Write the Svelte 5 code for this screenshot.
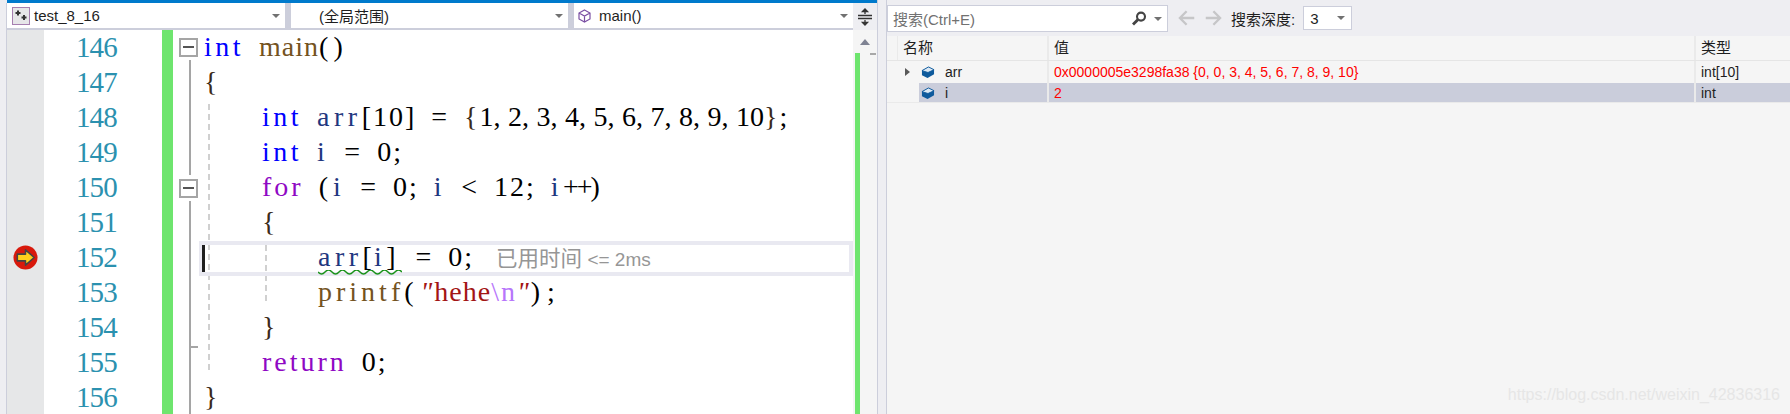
<script>
  const numbers = [146, 147, 148, 149, 150, 151, 152, 153, 154, 155, 156];
</script>

<div class="screen">
  <section class="left">
    <div class="accent"></div>
    <div class="navbar">
      <div class="combo project">
        <svg class="proj-icon" width="18" height="18" viewBox="0 0 18 18">
          <rect x="0.5" y="0.5" width="17" height="17" fill="#e6e6e8" stroke="#a67fb0" />
          <path d="M6 3.500v5M3.500 6h5M12 8v5M9.500 10.500h5" stroke="#333" stroke-width="2" />
        </svg>
        <span>test_8_16</span>
        <i class="caret"></i>
      </div>
      <div class="combo scope">
        <span>(全局范围)</span>
        <i class="caret"></i>
      </div>
      <div class="combo func">
        <svg width="13" height="14" viewBox="0 0 13 14" fill="none" stroke="#7a4fa3" stroke-width="1.2">
          <path d="M6.500 1L12 4v6l-5.500 3L1 10V4zM1 4l5.500 3L12 4M6.500 7v6" />
        </svg>
        <span>main()</span>
        <i class="caret"></i>
      </div>
      <div class="split-btn">
        <svg width="16" height="18" viewBox="0 0 16 18" fill="none" stroke="#333" stroke-width="1.3">
          <path d="M1 7.500h14M1 10.500h14M8 1v5M8 12v5" />
          <path d="M5.500 3.500L8 1l2.500 2.500zM5.500 14.500L8 17l2.500-2.500z" fill="#333" />
        </svg>
      </div>
    </div>

    <div class="editor">
      <div class="glyph-margin">
        <svg class="arrow" width="25" height="25" viewBox="0 0 26 26">
          <circle cx="13" cy="13" r="12.500" fill="#d8190c" />
          <path d="M4.500 9.500H13V5l9 8-9 8v-4.500H4.500z" fill="#ffcf1c" stroke="#444" stroke-width="1.6" stroke-linejoin="round" />
        </svg>
      </div>
      <div class="numbers">
        {#each numbers as n}
          <div>{n}</div>
        {/each}
      </div>
      <div class="changes"></div>
      <div class="code">
        <div class="outline-line one"></div>
        <div class="outline-line two"></div>
        <div class="outline-tick"></div>
        <div class="fold f1"></div>
        <div class="fold f2"></div>
        <div class="guide g1"></div>
        <div class="guide g2"></div>
        <div class="current">
          <i class="cursor"></i>
          <svg class="squiggle" width="84" height="6" viewBox="0 0 84 6">
            <path d="M0 2q3.500 4 7 0t7 0 7 0 7 0 7 0 7 0 7 0 7 0 7 0 7 0 7 0 7 0" fill="none" stroke="#1c931c" stroke-width="1.4" />
          </svg>
        </div>

        <div class="line"><b class="kw">int</b> <b class="fn narrow">main</b><span class="wide">()</span></div>
        <div class="line"><b class="br">&#123;</b></div>
        <div class="line in1"><b class="kw">int</b> <b class="var">arr</b>[10] = <b class="br">&#123;</b><span class="list">1, 2, 3, 4, 5, 6, 7, 8, 9, 10</span><b class="br">&#125;</b>;</div>
        <div class="line in1"><b class="kw">int</b> <b class="var">i</b> = 0;</div>
        <div class="line in1"><b class="ctl">for</b> <span class="wide">(</span><b class="var">i</b> = 0; <b class="var">i</b> &lt; 12; <b class="var">i</b><span class="tight">++</span>)</div>
        <div class="line in1"><b class="br">&#123;</b></div>
        <div class="line in2"><b class="var">arr</b>[<b class="var">i</b><span class="wide">]</span> = 0;<span class="hint"><span class="hint-cjk">已用时间</span> &lt;= 2ms</span></div>
        <div class="line in2"><b class="fn">printf</b><span class="wider">(</span><b class="str"><em>"</em><span class="snug">hehe</span><b class="esc">\n</b><em>"</em></b><span class="wider">)</span>;</div>
        <div class="line in1"><b class="br">&#125;</b></div>
        <div class="line in1"><b class="ctl">return</b> 0;</div>
        <div class="line"><b class="br">&#125;</b></div>
      </div>
      <div class="scrollbar">
        <i class="up"></i>
        <i class="thumb"></i>
        <i class="green"></i>
      </div>
    </div>
  </section>

  <section class="right">
    <div class="toolbar">
      <div class="search">
        <span>搜索(Ctrl+E)</span>
        <svg width="16" height="16" viewBox="0 0 20 20" fill="none" stroke="#444">
          <circle cx="12.500" cy="7" r="5" stroke-width="2.6" />
          <path d="M8.500 11l-6 6" stroke-width="3.6" />
        </svg>
        <i class="caret"></i>
      </div>
      <svg class="nav" width="44" height="18" viewBox="0 0 46 18" fill="none" stroke="#c6c6c8" stroke-width="2.4">
        <path d="M17 9H2M9 2L2 9l7 7M29 9h15M37 2l7 7-7 7" />
      </svg>
      <span class="depth-label">搜索深度:</span>
      <div class="depth">
        <span>3</span>
        <i class="caret"></i>
      </div>
    </div>

    <div class="table">
      <div class="row head">
        <div class="c-name"><span class="stub"></span>名称</div>
        <div class="c-value">值</div>
        <div class="c-type">类型</div>
      </div>
      <div class="row">
        <div class="c-name">
          <i class="expander"></i>
          <svg class="cube" width="14" height="13" viewBox="0 0 15 14"><path d="M1 5l7-4 6 3v5l-7 4-6-3z" fill="#0e5a9c" /><path d="M1 5l7-4 6 3-6.500 3z" fill="#dbe8f4" stroke="#0e5a9c" /></svg>
          <span>arr</span>
        </div>
        <div class="c-value red">0x0000005e3298fa38 &#123;0, 0, 3, 4, 5, 6, 7, 8, 9, 10&#125;</div>
        <div class="c-type">int[10]</div>
      </div>
      <div class="row selected">
        <div class="c-name">
          <i class="expander none"></i>
          <svg class="cube" width="14" height="13" viewBox="0 0 15 14"><path d="M1 5l7-4 6 3v5l-7 4-6-3z" fill="#0e5a9c" /><path d="M1 5l7-4 6 3-6.500 3z" fill="#dbe8f4" stroke="#0e5a9c" /></svg>
          <span>i</span>
        </div>
        <div class="c-value red">2</div>
        <div class="c-type">int</div>
      </div>
    </div>
    <div class="watermark">https://blog.csdn.net/weixin_42836316</div>
  </section>
</div>

<style>
  :global(body) {
    margin: 0;
    background: #f5f5f5;
  }
  .screen {
    display: flex;
    width: 1790px;
    height: 414px;
    overflow: hidden;
    font-family: "Liberation Sans", "Noto Sans CJK SC", sans-serif;
    font-size: 14px;
    color: #1e1e1e;
    background: #eeeef2;
  }
  .left {
    flex: none;
    width: 878px;
    box-sizing: border-box;
    border-right: 1px solid #cccedb;
  }
  .accent {
    height: 3px;
    margin-left: 7px;
    background: #007acc;
  }
  .navbar {
    display: flex;
    height: 27px;
    margin-left: 6px;
    padding-left: 1px;
    background: #cccedb;
    gap: 6px;
  }
  .combo {
    display: flex;
    flex: none;
    align-items: center;
    position: relative;
    height: 25px;
    box-sizing: border-box;
    background: #fff;
    font-size: 15px;
  }
  .caret {
    flex: none;
    width: 0;
    height: 0;
    border: 4px solid transparent;
    border-top: 4px solid #717171;
    border-bottom: 0;
  }
  .combo .caret {
    position: absolute;
    right: 5px;
    top: 11px;
  }
  .project {
    width: 278px;
  }
  .proj-icon {
    margin: 0 4px 0 5px;
  }
  .scope {
    width: 277px;
    padding-left: 28px;
  }
  .func {
    width: 279px;
    padding-left: 4px;
    gap: 8px;
  }
  .split-btn {
    display: flex;
    flex: 1;
    align-items: center;
    justify-content: center;
    margin-left: -6px;
    background: #eeeef2;
  }
  .editor {
    display: flex;
    height: 384px;
    margin-left: 6px;
    background: #fff;
    border-left: 1px solid #cccedb;
    overflow: hidden;
  }
  .glyph-margin {
    flex: none;
    width: 37px;
    background: #e6e7e8;
  }
  .arrow {
    display: block;
    margin: 215px 0 0 6px;
  }
  .numbers {
    flex: none;
    width: 73px;
    margin-right: 45px;
    font: 29px/35px "Liberation Serif", serif;
    letter-spacing: -0.8px;
    text-align: right;
    color: #2b91af;
  }
  .changes {
    flex: none;
    width: 11px;
    background: #6ee56e;
  }
  .code {
    position: relative;
    flex: 1;
    padding-left: 31px;
    font: 28px/35px "Liberation Serif", serif;
    color: #000;
  }
  .line {
    position: relative;
    top: -1px;
    height: 35px;
    white-space: pre;
    letter-spacing: 2px;
    word-spacing: 6px;
  }
  .line b {
    font-weight: 400;
  }
  .line em {
    font-style: italic;
  }
  .in1 {
    padding-left: 58px;
  }
  .in2 {
    padding-left: 114px;
  }
  .kw {
    letter-spacing: 3.5px;
  }
  .var {
    letter-spacing: 4.5px;
  }
  .fn {
    letter-spacing: 4px;
  }
  .ctl {
    letter-spacing: 3px;
  }
  .narrow {
    letter-spacing: 1px;
  }
  .wide {
    letter-spacing: 5px;
  }
  .wider {
    letter-spacing: 7px;
  }
  .tight {
    letter-spacing: -2px;
  }
  .snug {
    letter-spacing: 1px;
  }
  .list {
    letter-spacing: 0;
    word-spacing: 0.5px;
  }
  .kw {
    color: #0000ff;
  }
  .fn {
    color: #74531f;
  }
  .var {
    color: #1f377f;
  }
  .ctl {
    color: #8f08c4;
  }
  .br {
    color: #3b2a1a;
  }
  .str {
    color: #a31515;
  }
  .esc {
    color: #b776fb;
  }
  .hint {
    margin-left: 22px;
    font-family: "Liberation Sans", "Noto Sans CJK SC", sans-serif;
    font-size: 19px;
    color: #969696;
    letter-spacing: 0;
    word-spacing: 0;
  }
  .hint-cjk {
    font-size: 21.500px;
  }
  .current {
    position: absolute;
    left: 26px;
    right: 0;
    top: 211px;
    height: 27px;
    border: 4px solid #e9e9f1;
  }
  .cursor {
    position: absolute;
    left: -1px;
    top: 0;
    width: 3px;
    height: 27px;
    background: #1e1e1e;
  }
  .squiggle {
    position: absolute;
    left: 115px;
    top: 25px;
  }
  .outline-line {
    position: absolute;
    left: 16px;
    width: 2px;
    background: #a5a5a5;
  }
  .outline-line.one {
    top: 30px;
    height: 115px;
  }
  .outline-line.two {
    top: 171px;
    bottom: 0;
  }
  .outline-tick {
    position: absolute;
    left: 17px;
    top: 316px;
    width: 8px;
    height: 2px;
    background: #a5a5a5;
  }
  .fold {
    position: absolute;
    left: 6px;
    width: 15px;
    height: 15px;
    background: #fff;
    border: 2px solid #a5a5a5;
  }
  .fold::after {
    content: "";
    position: absolute;
    left: 2px;
    top: 6px;
    width: 11px;
    height: 2px;
    background: #555;
  }
  .f1 {
    top: 8px;
  }
  .f2 {
    top: 149px;
  }
  .guide {
    position: absolute;
    width: 2px;
    background: repeating-linear-gradient(#d0d0d0 0 6px, transparent 6px 10px);
  }
  .g1 {
    left: 35px;
    top: 74px;
    height: 270px;
  }
  .g2 {
    left: 92px;
    top: 215px;
    height: 60px;
  }
  .scrollbar {
    position: relative;
    flex: none;
    width: 24px;
    background: #f5f5f5;
  }
  .up {
    position: absolute;
    left: 7px;
    top: 9px;
    width: 0;
    height: 0;
    border: 5px solid transparent;
    border-bottom: 6px solid #7f8393;
    border-top: 0;
  }
  .thumb {
    position: absolute;
    left: 17px;
    top: 23px;
    width: 6px;
    height: 2px;
    background: #a8a8a8;
  }
  .green {
    position: absolute;
    left: 2px;
    top: 23px;
    bottom: 0;
    width: 5px;
    background: #6ee56e;
  }
  .right {
    position: relative;
    flex: 1;
    margin-left: 8px;
    background: #f5f5f5;
    border-left: 1px solid #cccedb;
  }
  .toolbar {
    display: flex;
    align-items: center;
    height: 36px;
    background: #eeeef2;
    font-size: 15px;
  }
  .search {
    display: flex;
    flex: none;
    align-items: center;
    width: 281px;
    height: 27px;
    margin-top: 1px;
    box-sizing: border-box;
    padding: 0 5px;
    background: #fff;
    border: 1px solid #cccedb;
    color: #717171;
  }
  .search span {
    flex: 1;
  }
  .search .caret {
    margin-left: 7px;
  }
  .nav {
    margin-left: 10px;
  }
  .depth-label {
    margin-left: 9px;
  }
  .depth {
    display: flex;
    align-items: center;
    justify-content: space-between;
    width: 49px;
    height: 24px;
    margin-left: 8px;
    padding: 0 6px;
    box-sizing: border-box;
    background: #fff;
    border: 1px solid #cccedb;
  }
  .row {
    display: flex;
    height: 22px;
    font-size: 14px;
    line-height: 22px;
  }
  .row.selected {
    height: 20px;
    line-height: 20px;
    background: linear-gradient(to right, transparent 32px, #cacddb 32px);
    box-shadow: inset 0 -1px 0 #eaeaea;
  }
  .row.head {
    height: 25px;
    line-height: 24px;
    font-size: 15px;
    border-bottom: 1px solid #e5e5e5;
    box-sizing: border-box;
  }
  .stub {
    width: 1px;
    height: 100%;
    margin: 0 5px 0 -6px;
    background: #eaeaea;
  }
  .c-name {
    display: flex;
    align-items: center;
    flex: none;
    width: 162px;
    padding-left: 16px;
    box-sizing: border-box;
    border-right: 2px solid #eaeaea;
  }
  .c-value {
    flex: none;
    width: 647px;
    padding-left: 5px;
    box-sizing: border-box;
    border-right: 2px solid #eaeaea;
  }
  .c-type {
    padding-left: 5px;
  }
  .red {
    color: #ff0000;
  }
  .expander {
    flex: none;
    width: 0;
    height: 0;
    margin: 0 11px 0 2px;
    border: 4px solid transparent;
    border-left: 5px solid #595959;
    border-right: 0;
  }
  .expander.none {
    visibility: hidden;
  }
  .cube {
    margin-right: 10px;
  }
  .watermark {
    position: absolute;
    right: 10px;
    bottom: 10px;
    font-size: 16px;
    color: #e6e6e6;
  }
</style>
